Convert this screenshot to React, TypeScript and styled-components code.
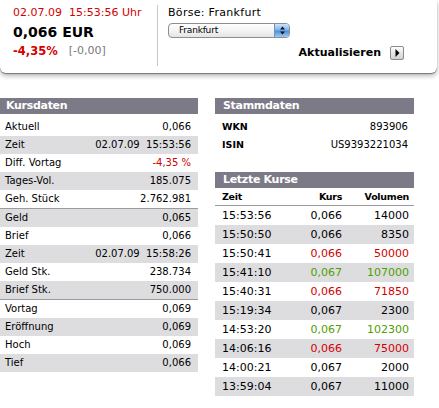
import React from 'react';
import styled, { createGlobalStyle } from 'styled-components';

const GlobalStyle = createGlobalStyle`
  html, body { margin: 0; padding: 0; background: #ffffff; }
  body { font-family: "DejaVu Sans", Verdana, sans-serif; color: #000; }
`;

const RED = '#d40000';
const GREEN = '#4f9e00';

const Page = styled.div`
  width: 439px;
  height: 408px;
  overflow: hidden;
`;

const QuoteCard = styled.header`
  width: 437px;
  height: 73px;
  box-sizing: border-box;
  background: #fff;
  border-radius: 0 0 6px 6px;
  box-shadow: 0 1px 1px rgba(0, 0, 0, 0.4), 0 3px 5px rgba(0, 0, 0, 0.28);
  display: flex;
`;

const QuoteInfo = styled.div`
  width: 157px;
  box-sizing: border-box;
  padding: 6px 0 0 13px;
`;

const QuoteTime = styled.div`
  font-size: 11px;
  line-height: 14px;
  color: ${RED};
  white-space: pre;
`;

const QuotePrice = styled.div`
  margin-top: 3px;
  font-size: 14px;
  line-height: 18px;
  font-weight: bold;
`;

const QuoteChange = styled.div`
  margin-top: 3px;
  font-size: 11px;
  line-height: 14px;
  display: flex;
  gap: 11px;
`;

const ChangePct = styled.span`
  color: ${RED};
  font-weight: bold;
  font-size: 11.5px;
`;

const ChangeAbs = styled.span`
  color: #7a7a7a;
`;

const VDivider = styled.div`
  width: 1px;
  background: #c9c9c9;
  margin: 5px 0 7px;
`;

const Exchange = styled.div`
  width: 247px;
  box-sizing: border-box;
  padding: 6px 0 0 10px;
`;

const ExchangeLabel = styled.div`
  font-size: 11px;
  line-height: 14px;
  letter-spacing: 0.3px;
`;

const SelectBox = styled.div`
  margin-top: 3px;
  width: 122px;
  height: 15px;
  box-sizing: border-box;
  border: 1px solid #8e8e8e;
  border-radius: 4px;
  background: linear-gradient(#ffffff, #f4f4f4 50%, #e4e4e4);
  display: flex;
  align-items: stretch;
  overflow: hidden;
`;

const SelectText = styled.span`
  flex: 1;
  padding-left: 10px;
  font-size: 9px;
  line-height: 13px;
  letter-spacing: -0.2px;
`;

const SelectStepper = styled.span`
  width: 14px;
  border-left: 1px solid #6f93c4;
  background: linear-gradient(#cfe4fb, #7fb3ee 45%, #4f8fdc 55%, #9fcaf6);
  display: flex;
  align-items: center;
  justify-content: center;
`;

const RefreshRow = styled.div`
  margin-top: 7px;
  width: 236px;
  height: 15px;
  display: flex;
  justify-content: flex-end;
  align-items: center;
  gap: 9px;
`;

const RefreshLabel = styled.span`
  font-size: 11px;
  font-weight: bold;
  line-height: 15px;
`;

const RefreshButton = styled.span`
  width: 14px;
  height: 14px;
  box-sizing: border-box;
  border: 1px solid #8a8a8a;
  border-radius: 2px;
  background: linear-gradient(#fdfdfd, #e6e6e6 50%, #d2d2d2);
  display: flex;
  align-items: center;
  justify-content: center;
`;

const Panels = styled.main`
  margin-top: 25px;
  display: flex;
  gap: 17px;
  align-items: flex-start;
`;

const Panel = styled.section<{ $width: number }>`
  width: ${(p) => p.$width}px;
`;

const SectionHeader = styled.h2<{ $indent: number; $gap?: number }>`
  margin: ${(p) => p.$gap ?? 0}px 0 0;
  height: 16px;
  line-height: 16px;
  padding-left: ${(p) => p.$indent}px;
  background: #7b7a86;
  color: #fff;
  font-size: 11px;
  font-weight: bold;
  letter-spacing: -0.3px;
`;

const DataList = styled.div`
  margin-top: 4px;
`;

const DataRow = styled.div<{ $shade: boolean }>`
  height: 18px;
  line-height: 18px;
  font-size: 10px;
  padding: 0 7px 0 5px;
  display: flex;
  justify-content: space-between;
  background: ${(p) => (p.$shade ? '#dddde0' : 'transparent')};
`;

const Value = styled.span<{ $color?: string }>`
  color: ${(p) => p.$color ?? '#000'};
  white-space: pre;
`;

const GroupDivider = styled.div`
  height: 1px;
  background: #9c9c9c;
`;

const MasterRow = styled.div`
  height: 18px;
  line-height: 18px;
  font-size: 10px;
  padding: 0 6px 0 7px;
  display: flex;
  justify-content: space-between;
`;

const MasterLabel = styled.span`
  font-weight: bold;
  font-size: 9.5px;
`;

const TradeGrid = styled.div<{ $shade?: boolean; $head?: boolean }>`
  display: grid;
  grid-template-columns: 1fr 60px 67px;
  padding: 0 5px 0 7px;
  height: ${(p) => (p.$head ? 17 : 19)}px;
  line-height: ${(p) => (p.$head ? 17 : 19)}px;
  font-size: ${(p) => (p.$head ? 9.5 : 11)}px;
  font-weight: ${(p) => (p.$head ? 'bold' : 'normal')};
  letter-spacing: ${(p) => (p.$head ? '-0.3px' : '0')};
  border-bottom: ${(p) => (p.$head ? '1px solid #9c9c9c' : 'none')};
  background: ${(p) => (p.$shade ? '#dddde0' : 'transparent')};
`;

const Cell = styled.span<{ $right?: boolean; $color?: string }>`
  text-align: ${(p) => (p.$right ? 'right' : 'left')};
  color: ${(p) => p.$color ?? '#000'};
`;

type KRow = { label: string; value: string; color?: string };

const groups: KRow[][] = [
  [
    { label: 'Aktuell', value: '0,066' },
    { label: 'Zeit', value: '02.07.09\u00a0\u00a015:53:56' },
    { label: 'Diff. Vortag', value: '-4,35 %', color: RED },
    { label: 'Tages-Vol.', value: '185.075' },
    { label: 'Geh. Stück', value: '2.762.981' },
  ],
  [
    { label: 'Geld', value: '0,065' },
    { label: 'Brief', value: '0,066' },
    { label: 'Zeit', value: '02.07.09\u00a0\u00a015:58:26' },
    { label: 'Geld Stk.', value: '238.734' },
    { label: 'Brief Stk.', value: '750.000' },
  ],
  [
    { label: 'Vortag', value: '0,069' },
    { label: 'Eröffnung', value: '0,069' },
    { label: 'Hoch', value: '0,069' },
    { label: 'Tief', value: '0,066' },
  ],
];

type Trend = 'up' | 'down' | 'flat';
const trades: { time: string; price: string; vol: string; trend: Trend }[] = [
  { time: '15:53:56', price: '0,066', vol: '14000', trend: 'flat' },
  { time: '15:50:50', price: '0,066', vol: '8350', trend: 'flat' },
  { time: '15:50:41', price: '0,066', vol: '50000', trend: 'down' },
  { time: '15:41:10', price: '0,067', vol: '107000', trend: 'up' },
  { time: '15:40:31', price: '0,066', vol: '71850', trend: 'down' },
  { time: '15:19:34', price: '0,067', vol: '2300', trend: 'flat' },
  { time: '14:53:20', price: '0,067', vol: '102300', trend: 'up' },
  { time: '14:06:16', price: '0,066', vol: '75000', trend: 'down' },
  { time: '14:00:21', price: '0,067', vol: '2000', trend: 'flat' },
  { time: '13:59:04', price: '0,067', vol: '11000', trend: 'flat' },
];

const trendColor = (t: Trend) => (t === 'up' ? GREEN : t === 'down' ? RED : '#000');

export default function App() {
  let idx = 0;
  return (
    <Page>
      <GlobalStyle />
      <QuoteCard>
        <QuoteInfo>
          <QuoteTime>{'02.07.09  15:53:56 Uhr'}</QuoteTime>
          <QuotePrice>0,066 EUR</QuotePrice>
          <QuoteChange>
            <ChangePct>-4,35%</ChangePct>
            <ChangeAbs>[-0,00]</ChangeAbs>
          </QuoteChange>
        </QuoteInfo>
        <VDivider />
        <Exchange>
          <ExchangeLabel>Börse: Frankfurt</ExchangeLabel>
          <SelectBox>
            <SelectText>Frankfurt</SelectText>
            <SelectStepper>
              <svg width="5" height="9" viewBox="0 0 5 9">
                <path d="M2.5 0.5 L5 3.5 L0 3.5 Z" fill="#111" />
                <path d="M0 5.5 L5 5.5 L2.5 8.5 Z" fill="#111" />
              </svg>
            </SelectStepper>
          </SelectBox>
          <RefreshRow>
            <RefreshLabel>Aktualisieren</RefreshLabel>
            <RefreshButton>
              <svg width="5" height="8" viewBox="0 0 5 8">
                <path d="M0.5 0 L4.5 4 L0.5 8 Z" fill="#000" />
              </svg>
            </RefreshButton>
          </RefreshRow>
        </Exchange>
      </QuoteCard>

      <Panels>
        <Panel $width={198}>
          <SectionHeader $indent={6}>Kursdaten</SectionHeader>
          <DataList>
            {groups.map((g, gi) => (
              <React.Fragment key={gi}>
                {gi > 0 && <GroupDivider />}
                {g.map((r) => {
                  const shade = idx % 2 === 1;
                  idx += 1;
                  return (
                    <DataRow key={r.label + idx} $shade={shade}>
                      <span>{r.label}</span>
                      <Value $color={r.color}>{r.value}</Value>
                    </DataRow>
                  );
                })}
              </React.Fragment>
            ))}
          </DataList>
        </Panel>

        <Panel $width={199}>
          <SectionHeader $indent={8}>Stammdaten</SectionHeader>
          <DataList>
            <MasterRow>
              <MasterLabel>WKN</MasterLabel>
              <span>893906</span>
            </MasterRow>
            <MasterRow>
              <MasterLabel>ISIN</MasterLabel>
              <span>US9393221034</span>
            </MasterRow>
          </DataList>
          <SectionHeader $indent={8} $gap={18}>Letzte Kurse</SectionHeader>
          <TradeGrid $head>
            <Cell>Zeit</Cell>
            <Cell $right>Kurs</Cell>
            <Cell $right>Volumen</Cell>
          </TradeGrid>
          {trades.map((t, i) => (
            <TradeGrid key={t.time} $shade={i % 2 === 1}>
              <Cell>{t.time}</Cell>
              <Cell $right $color={trendColor(t.trend)}>{t.price}</Cell>
              <Cell $right $color={trendColor(t.trend)}>{t.vol}</Cell>
            </TradeGrid>
          ))}
        </Panel>
      </Panels>
    </Page>
  );
}
